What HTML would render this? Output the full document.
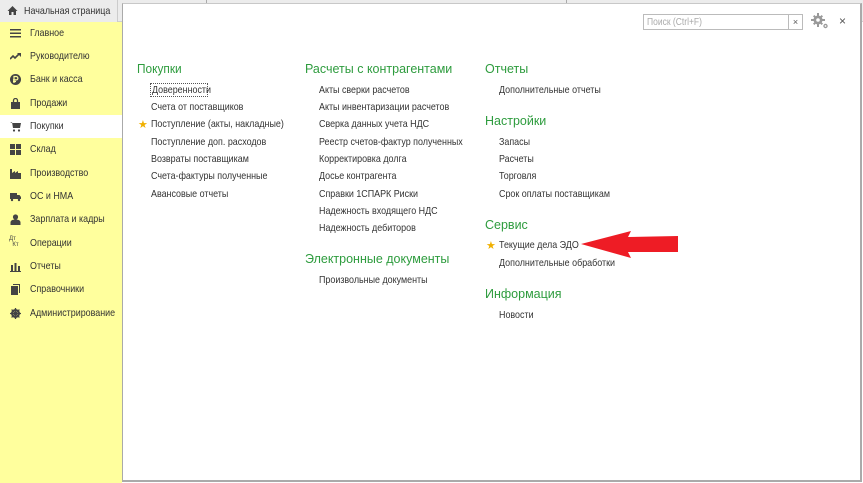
<!DOCTYPE html>
<html><head><meta charset="utf-8"><style>
*{margin:0;padding:0;box-sizing:border-box}
body{width:863px;height:483px;overflow:hidden;background:#fff;font-family:"Liberation Sans",Arial,sans-serif;font-size:11px;color:#333;position:relative}
.t{display:inline-block;transform:scaleX(0.85);transform-origin:0 0;white-space:nowrap}
.top{position:absolute;left:0;top:0;width:863px;height:22px;background:#ececec;border-bottom:1px solid #d0d0d0}
.tab{position:absolute;left:0;top:0;width:118px;height:22px;background:#ececec;border-right:1px solid #ccc;padding:5px 0 0 24px;font-size:10.5px;color:#333;white-space:nowrap}
.side{position:absolute;left:0;top:22px;width:122px;height:461px;background:#ffff9d}
.row{position:absolute;left:0;width:122px;height:23px;padding:5px 0 0 30px;font-size:10.5px;white-space:nowrap}
.row.sel{background:#fff}
.ic{position:absolute;left:10px;top:6px;width:11px;height:11px}
.panel{position:absolute;left:122px;top:3px;width:740px;height:479px;background:#fff;border-left:1px solid #aaa;border-top:1px solid #c8c8c8;border-right:2px solid #aaa;border-bottom:2px solid #aaa}
.h{position:absolute;color:#2e9c3e;font-size:12.5px;white-space:nowrap}
.i{position:absolute;font-size:10.5px;color:#333;white-space:nowrap}
.star{position:absolute;color:#f0b000;font-size:11px}
.search{position:absolute;left:643px;top:14px;width:160px;height:16px;border:1px solid #bbb;font-size:10px;color:#aaa;padding:2px 3px;background:#fff;white-space:nowrap}
.search span{position:absolute;right:0;top:0;width:14px;height:14px;border-left:1px solid #bbb;color:#555;font-size:9px;text-align:center;line-height:14px}
</style></head><body>
<div class="top"></div>
<div style="position:absolute;left:206px;top:0;width:1px;height:3px;background:#aaa"></div>
<div style="position:absolute;left:566px;top:0;width:1px;height:3px;background:#aaa"></div>
<div class="tab"><svg style="position:absolute;left:7px;top:5px" width="11" height="11" viewBox="0 0 11 11"><path d="M5.5 1 L10.5 6 L9 6 L9 10 L6.5 10 L6.5 7 L4.5 7 L4.5 10 L2 10 L2 6 L0.5 6 Z" fill="#444"/></svg><span class="t">Начальная страница</span></div>
<div class="side">
<div class="row" style="top:0"><svg class="ic" viewBox="0 0 11 11"><path d="M0 1h11v1.5H0zM0 4.5h11V6H0zM0 8h11v1.5H0z" fill="#444"/></svg><span class="t">Главное</span></div>
<div class="row" style="top:23px"><svg class="ic" viewBox="0 0 11 11"><path d="M0 8 L3 5 L5 7 L9 3" stroke="#444" stroke-width="1.6" fill="none"/><path d="M7 2h4v4z" fill="#444"/></svg><span class="t">Руководителю</span></div>
<div class="row" style="top:46px"><svg class="ic" viewBox="0 0 11 11"><circle cx="5.5" cy="5.5" r="5.5" fill="#444"/><path d="M4 9V2.5h2.2a1.6 1.6 0 0 1 0 3.4H3M3 7.5h3" stroke="#ffff9d" stroke-width="1.2" fill="none"/></svg><span class="t">Банк и касса</span></div>
<div class="row" style="top:70px"><svg class="ic" viewBox="0 0 11 11"><path d="M1 4h9v7H1z" fill="#444"/><path d="M3.5 5V2.5a2 2 0 0 1 4 0V5" stroke="#444" stroke-width="1.3" fill="none"/></svg><span class="t">Продажи</span></div>
<div class="row sel" style="top:93px"><svg class="ic" viewBox="0 0 11 11"><path d="M0 1h2l1 6h7l1-5H2.5" fill="#444"/><circle cx="4" cy="9.5" r="1.1" fill="#444"/><circle cx="9" cy="9.5" r="1.1" fill="#444"/></svg><span class="t">Покупки</span></div>
<div class="row" style="top:116px"><svg class="ic" viewBox="0 0 11 11"><path d="M0 0h5v5H0zM6 0h5v5H6zM0 6h5v5H0zM6 6h5v5H6z" fill="#444"/></svg><span class="t">Склад</span></div>
<div class="row" style="top:140px"><svg class="ic" viewBox="0 0 11 11"><path d="M0 11V1h2v4l3-2v2l3-2v2h3v6z" fill="#444"/></svg><span class="t">Производство</span></div>
<div class="row" style="top:163px"><svg class="ic" viewBox="0 0 11 11"><path d="M0 2h7v6H0zM7 4h2.5l1.5 2v2H7z" fill="#444"/><circle cx="2" cy="9" r="1.2" fill="#444"/><circle cx="9" cy="9" r="1.2" fill="#444"/></svg><span class="t">ОС и НМА</span></div>
<div class="row" style="top:186px"><svg class="ic" viewBox="0 0 11 11"><circle cx="5.5" cy="3" r="2.6" fill="#444"/><path d="M0.5 11v-2.5c0-2 2-3 5-3s5 1 5 3V11z" fill="#444"/></svg><span class="t">Зарплата и кадры</span></div>
<div class="row" style="top:210px"><span style="position:absolute;left:9px;top:4px;font-size:6px;line-height:6px;color:#444">Дт<br>&nbsp;&nbsp;Кт</span><span class="t">Операции</span></div>
<div class="row" style="top:233px"><svg class="ic" viewBox="0 0 11 11"><path d="M0 10h11v1H0zM1 4h2v6H1zM4.5 2h2v8h-2zM8 5h2v5H8z" fill="#444"/></svg><span class="t">Отчеты</span></div>
<div class="row" style="top:256px"><svg class="ic" viewBox="0 0 11 11"><path d="M1 2h7v9H1z" fill="#444"/><path d="M3 0h7v9H9V1H3z" fill="#444"/></svg><span class="t">Справочники</span></div>
<div class="row" style="top:280px"><svg class="ic" viewBox="0 0 11 11"><circle cx="5.5" cy="5.5" r="3.5" fill="none" stroke="#444" stroke-width="2"/><path d="M5.5 0v11M0 5.5h11M1.6 1.6l7.8 7.8M9.4 1.6l-7.8 7.8" stroke="#444" stroke-width="1.3"/></svg><span class="t">Администрирование</span></div>
</div>
<div class="panel"></div>
<div class="search"><span class="t" style="position:static;border:0;width:auto;height:auto;color:#aaa;font-size:10px;line-height:normal;text-align:left">Поиск (Ctrl+F)</span><span>×</span></div>
<svg style="position:absolute;left:811px;top:13px" width="18" height="16" viewBox="0 0 18 16"><g fill="#999"><circle cx="7" cy="7" r="4.5"/><path d="M6 0h2v14H6zM0 6h14v2H0zM2 3.4l1.4-1.4 8.6 8.6-1.4 1.4zM10.6 2l1.4 1.4-8.6 8.6L2 10.6z"/><circle cx="14.5" cy="13" r="2.2"/></g><circle cx="7" cy="7" r="1.8" fill="#fff"/><circle cx="14.5" cy="13" r="0.9" fill="#fff"/></svg>
<div style="position:absolute;left:839px;top:14px;font-size:12px;color:#555">×</div>

<div class="h" style="left:137px;top:62px"><span class="t" style="transform:scaleX(0.95)">Покупки</span></div>
<div class="i" style="left:150px;top:83px;border:1px dotted #555;padding:0 1px;width:58px;height:14px"><span class="t">Доверенности</span></div>
<div class="i" style="left:151px;top:101px"><span class="t">Счета от поставщиков</span></div>
<div class="star" style="left:138px;top:118px">★</div>
<div class="i" style="left:151px;top:118px"><span class="t">Поступление (акты, накладные)</span></div>
<div class="i" style="left:151px;top:136px"><span class="t">Поступление доп. расходов</span></div>
<div class="i" style="left:151px;top:153px"><span class="t">Возвраты поставщикам</span></div>
<div class="i" style="left:151px;top:170px"><span class="t">Счета-фактуры полученные</span></div>
<div class="i" style="left:151px;top:188px"><span class="t">Авансовые отчеты</span></div>

<div class="h" style="left:305px;top:62px">Расчеты с контрагентами</div>
<div class="i" style="left:319px;top:84px"><span class="t">Акты сверки расчетов</span></div>
<div class="i" style="left:319px;top:101px"><span class="t">Акты инвентаризации расчетов</span></div>
<div class="i" style="left:319px;top:118px"><span class="t">Сверка данных учета НДС</span></div>
<div class="i" style="left:319px;top:136px"><span class="t">Реестр счетов-фактур полученных</span></div>
<div class="i" style="left:319px;top:153px"><span class="t">Корректировка долга</span></div>
<div class="i" style="left:319px;top:170px"><span class="t">Досье контрагента</span></div>
<div class="i" style="left:319px;top:188px"><span class="t">Справки 1СПАРК Риски</span></div>
<div class="i" style="left:319px;top:205px"><span class="t">Надежность входящего НДС</span></div>
<div class="i" style="left:319px;top:222px"><span class="t">Надежность дебиторов</span></div>
<div class="h" style="left:305px;top:252px">Электронные документы</div>
<div class="i" style="left:319px;top:274px"><span class="t">Произвольные документы</span></div>

<div class="h" style="left:485px;top:62px">Отчеты</div>
<div class="i" style="left:499px;top:84px"><span class="t">Дополнительные отчеты</span></div>
<div class="h" style="left:485px;top:114px">Настройки</div>
<div class="i" style="left:499px;top:136px"><span class="t">Запасы</span></div>
<div class="i" style="left:499px;top:153px"><span class="t">Расчеты</span></div>
<div class="i" style="left:499px;top:170px"><span class="t">Торговля</span></div>
<div class="i" style="left:499px;top:188px"><span class="t">Срок оплаты поставщикам</span></div>
<div class="h" style="left:485px;top:218px">Сервис</div>
<div class="star" style="left:486px;top:239px">★</div>
<div class="i" style="left:499px;top:239px"><span class="t">Текущие дела ЭДО</span></div>
<div class="i" style="left:499px;top:257px"><span class="t">Дополнительные обработки</span></div>
<div class="h" style="left:485px;top:287px">Информация</div>
<div class="i" style="left:499px;top:309px"><span class="t">Новости</span></div>

<svg style="position:absolute;left:0;top:0" width="863" height="483"><polygon points="581,244 631,231 628,237 678,236 678,252 628,252 631,258" fill="#ee1c25"/></svg>
</body></html>
